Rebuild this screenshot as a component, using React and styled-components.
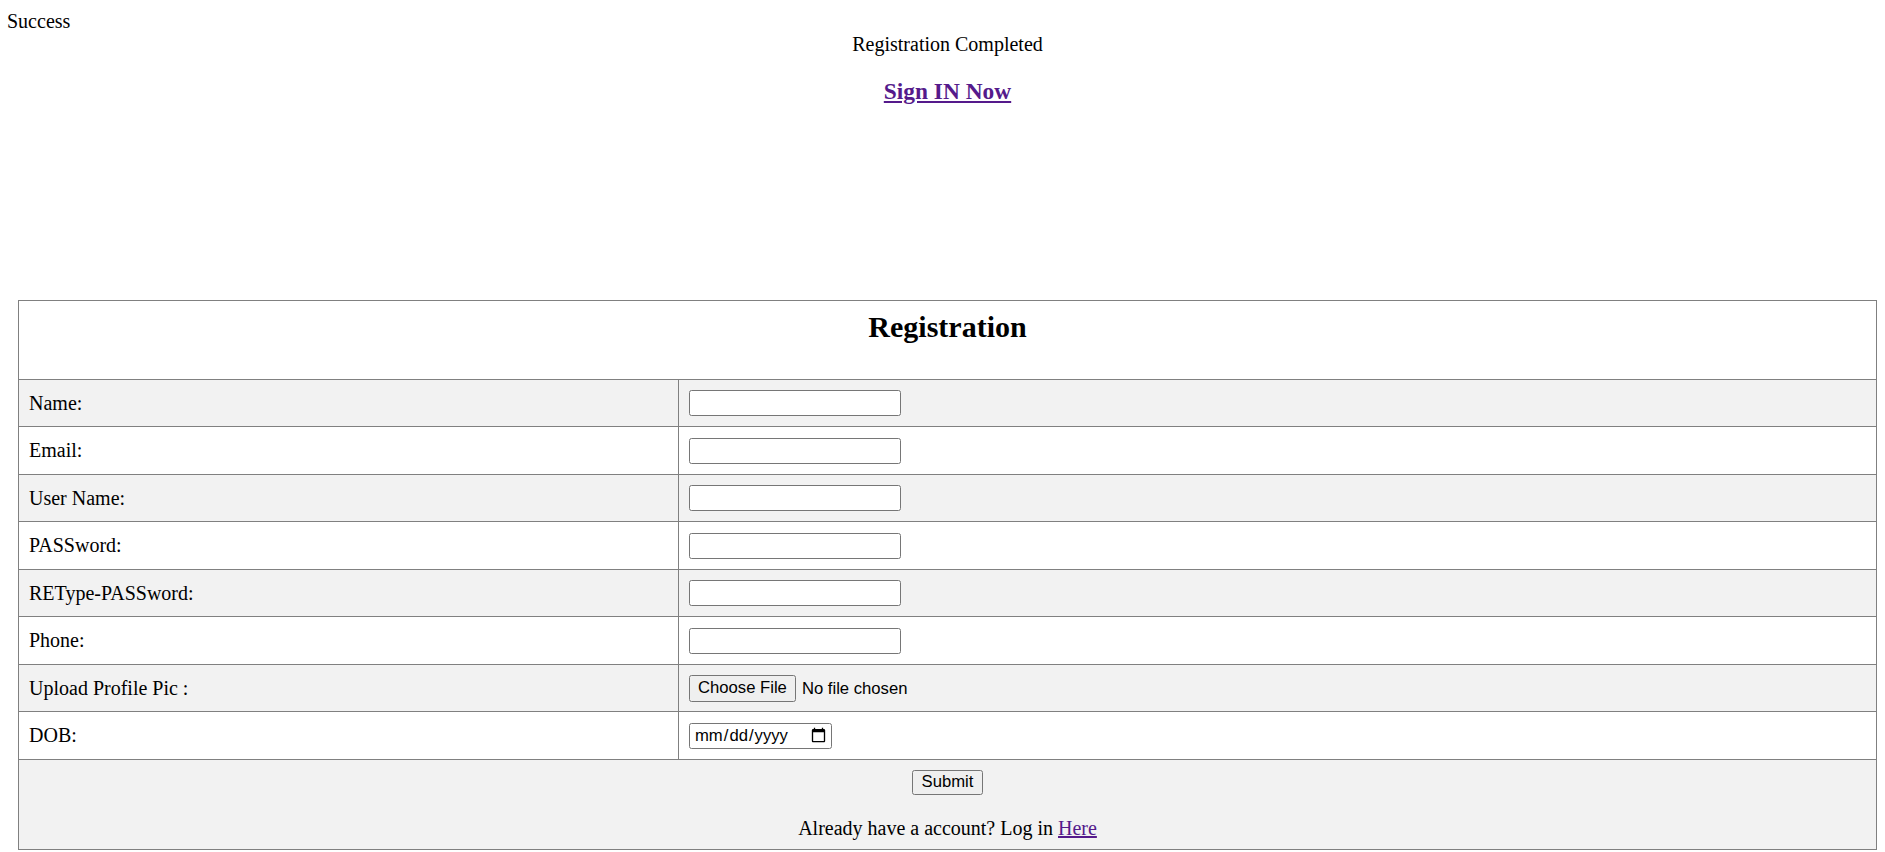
import React from 'react';
import styled, { createGlobalStyle } from 'styled-components';

const GlobalStyle = createGlobalStyle`
  html, body { margin: 0; padding: 0; background: #fff; }
  body {
    font-family: "Liberation Serif", "Times New Roman", serif;
    font-size: 20px;
    line-height: 23px;
    color: #000;
  }
`;

const Page = styled.div`
  padding: 10px 0 0 18px;
`;

const Success = styled.div`
  margin-left: -11px;
`;

const Notice = styled.div`
  width: 1859px;
  text-align: center;
`;

const SignHeading = styled.h3`
  width: 1859px;
  margin: 22.4px 0 23.4px;
  font-size: 23.4px;
  line-height: 26.9px;
  font-weight: bold;
  text-align: center;
`;

const VisitedLink = styled.a`
  color: #551a8b;
  text-decoration: underline;
`;

const FormTable = styled.div`
  margin-top: 194.7px;
  width: 1859px;
  box-sizing: border-box;
  border: 1px solid #808080;
`;

const HeaderRow = styled.div`
  height: 78px;
  box-sizing: border-box;
  padding-top: 9px;
  background: #fff;
`;

const Title = styled.h2`
  margin: 0;
  font-size: 30px;
  line-height: 34.5px;
  font-weight: bold;
  text-align: center;
`;

const Row = styled.div`
  display: grid;
  grid-template-columns: 660px 1fr;
  height: 47.5px;
  box-sizing: border-box;
  border-top: 1px solid #808080;
  background: ${(p) => (p.$shaded ? '#f2f2f2' : '#fff')};
`;

const LabelCell = styled.div`
  display: flex;
  align-items: center;
  box-sizing: border-box;
  padding: 0 10px;
  border-right: 1px solid #808080;
`;

const FieldCell = styled.div`
  display: flex;
  align-items: center;
  padding: 0 10px;
`;

const controlFont = `
  font-family: "Liberation Sans", Arial, sans-serif;
  font-size: 16.67px;
`;

const TextInput = styled.input`
  ${controlFont}
  width: 212px;
  height: 26px;
  box-sizing: border-box;
  margin: 0;
  padding: 1px 2px;
  border: 1px solid #767676;
  border-radius: 2.5px;
  background: #fff;
`;

const FileInput = styled.input`
  ${controlFont}
  margin: 0;
  color: #000;
  &::file-selector-button {
    ${controlFont}
    height: 27px;
    padding: 0 8px;
    margin: 0 6px 0 0;
    border: 1px solid #767676;
    border-radius: 2.5px;
    background: #efefef;
    color: #000;
  }
`;

const DateInput = styled.input`
  ${controlFont}
  width: 143px;
  height: 26px;
  box-sizing: border-box;
  margin: 0;
  padding: 1px 2px 1px 4px;
  border: 1px solid #767676;
  border-radius: 2.5px;
  background: #fff;
  color: #000;
`;

const SubmitRow = styled.div`
  display: flex;
  flex-direction: column;
  align-items: center;
  box-sizing: border-box;
  padding: 10px 10px 9px;
  border-top: 1px solid #808080;
  background: #f2f2f2;
`;

const SubmitButton = styled.button`
  ${controlFont}
  height: 25px;
  margin: 0;
  padding: 0 9px;
  border: 1px solid #767676;
  border-radius: 2.5px;
  background: #efefef;
  color: #000;
`;

const Footer = styled.div`
  margin-top: 22px;
  text-align: center;
`;

const fields = [
  { label: 'Name:', type: 'text' },
  { label: 'Email:', type: 'text' },
  { label: 'User Name:', type: 'text' },
  { label: 'PASSword:', type: 'password' },
  { label: 'REType-PASSword:', type: 'password' },
  { label: 'Phone:', type: 'text' },
  { label: 'Upload Profile Pic :', type: 'file' },
  { label: 'DOB:', type: 'date' },
];

function Field({ type }) {
  if (type === 'file') return <FileInput type="file" />;
  if (type === 'date') return <DateInput type="date" />;
  return <TextInput type={type} />;
}

export default function App() {
  return (
    <>
      <GlobalStyle />
      <Page>
        <Success>Success</Success>
        <Notice>Registration Completed</Notice>
        <SignHeading>
          <VisitedLink href="#">Sign IN Now</VisitedLink>
        </SignHeading>
        <FormTable>
          <HeaderRow>
            <Title>Registration</Title>
          </HeaderRow>
          {fields.map((f, i) => (
            <Row key={f.label} $shaded={i % 2 === 0}>
              <LabelCell>{f.label}</LabelCell>
              <FieldCell>
                <Field type={f.type} />
              </FieldCell>
            </Row>
          ))}
          <SubmitRow>
            <SubmitButton type="button">Submit</SubmitButton>
            <Footer>
              Already have a account? Log in <VisitedLink href="#">Here</VisitedLink>
            </Footer>
          </SubmitRow>
        </FormTable>
      </Page>
    </>
  );
}
